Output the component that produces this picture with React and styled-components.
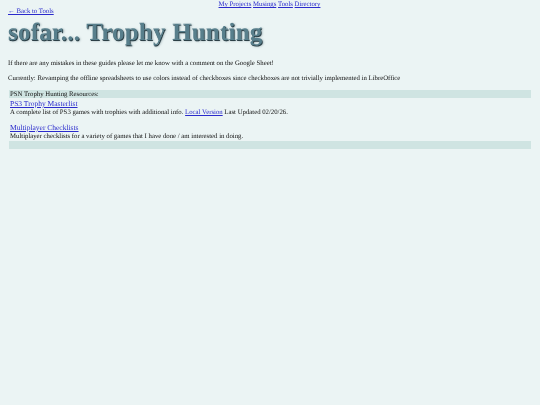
import React from "react";
import styled, { createGlobalStyle } from "styled-components";

const Global = createGlobalStyle`
  html, body { margin: 0; padding: 0; background: #ebf4f4; }
  body { font-family: "Liberation Serif", "Times New Roman", serif; font-size: 6.75px; line-height: 8px; color: #111; text-rendering: geometricPrecision; }
  a { color: #2a2acc; text-decoration: underline; }
`;

const Page = styled.div`
  width: 540px;
  height: 405px;
  padding: 0 9px 0 8px;
  box-sizing: border-box;
  display: flex;
  flex-direction: column;
  filter: blur(0.25px);
`;

const TopNav = styled.nav`
  display: flex;
  justify-content: center;
  gap: 1.7px;
  height: 7px;
  line-height: 10px;
`;

const BackLink = styled.a`
  display: block;
  height: 9px;
  line-height: 9px;
`;

const Title = styled.h1`
  margin: 3px 0 0;
  height: 28px;
  font-size: 25px;
  line-height: 28px;
  font-weight: 700;
  letter-spacing: 0.2px;
  white-space: nowrap;
  color: #587f8c;
  text-shadow: 0.7px 0.7px 0.6px #2c3f46, 1.3px 1.3px 2.2px #8a9ea4;
`;

const Para = styled.p`
  margin: ${(p) => p.$top}px 0 0;
  height: 9px;
  line-height: ${(p) => p.$line}px;
`;

const Table = styled.section`
  margin: 7px 0 0 1px;
`;

const Band = styled.div`
  background: #cfe4e2;
  height: 8px;
  line-height: 10px;
  padding-left: 1px;
  margin-top: ${(p) => p.$top || 0}px;
`;

const Entry = styled.div`
  margin-top: ${(p) => p.$top}px;
  padding-left: 1px;
`;

const EntryLink = styled.a`
  display: block;
  font-size: 7.5px;
  line-height: 10px;
  height: 9px;
`;

const EntryText = styled.div`
  line-height: 10px;
  height: 8px;
`;

export default function App() {
  return (
    <Page>
      <Global />
      <TopNav>
        <a href="#">My Projects</a>
        <a href="#">Musings</a>
        <a href="#">Tools</a>
        <a href="#">Directory</a>
      </TopNav>
      <BackLink href="#">← Back to Tools</BackLink>
      <Title>sofar... Trophy Hunting</Title>
      <Para $top={12} $line={9}>If there are any mistakes in these guides please let me know with a comment on the Google Sheet!</Para>
      <Para $top={6} $line={10}>Currently: Revamping the offline spreadsheets to use colors instead of checkboxes since checkboxes are not trivially implemented in LibreOffice</Para>
      <Table>
        <Band>PSN Trophy Hunting Resources:</Band>
        <Entry $top={1}>
          <EntryLink href="#">PS3 Trophy Masterlist</EntryLink>
          <EntryText>
            A complete list of PS3 games with trophies with additional info. <a href="#">Local Version</a> Last Updated 02/20/26.
          </EntryText>
        </Entry>
        <Entry $top={7}>
          <EntryLink href="#">Multiplayer Checklists</EntryLink>
          <EntryText>Multiplayer checklists for a variety of games that I have done / am interested in doing.</EntryText>
        </Entry>
        <Band $top={1} />
      </Table>
    </Page>
  );
}
